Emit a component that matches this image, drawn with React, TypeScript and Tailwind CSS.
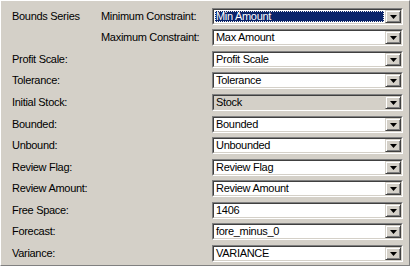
const rows: { label: string; sub?: string; value: string; h: number; focus?: boolean; disabled?: boolean }[] = [
  { label: "Bounds Series", sub: "Minimum Constraint:", value: "Min Amount", h: 21, focus: true },
  { label: "", sub: "Maximum Constraint:", value: "Max Amount", h: 22 },
  { label: "Profit Scale:", value: "Profit Scale", h: 21 },
  { label: "Tolerance:", value: "Tolerance", h: 22 },
  { label: "Initial Stock:", value: "Stock", h: 22, disabled: true },
  { label: "Bounded:", value: "Bounded", h: 21 },
  { label: "Unbound:", value: "Unbounded", h: 22 },
  { label: "Review Flag:", value: "Review Flag", h: 21 },
  { label: "Review Amount:", value: "Review Amount", h: 22 },
  { label: "Free Space:", value: "1406", h: 21 },
  { label: "Forecast:", value: "fore_minus_0", h: 22 },
  { label: "Variance:", value: "VARIANCE", h: 21 },
];

function Combo({ value, focus, disabled }: { value: string; focus?: boolean; disabled?: boolean }) {
  return (
    <div className="flex h-[17px] w-[191px] border border-t-[#808080] border-l-[#808080] border-b-white border-r-white">
      <div
        className={`flex min-w-0 flex-1 items-center border border-t-[#404040] border-l-[#404040] border-b-[#d4d0c8] border-r-[#d4d0c8] ${
          disabled ? "bg-[#d4d0c8]" : "bg-white"
        }`}
      >
        <div className="flex h-full flex-1 items-center p-px">
          {focus ? (
            <div className="flex h-full flex-1 items-center border border-dotted border-[#f0f0f0] bg-[#0a246a] text-white">
              {value}
            </div>
          ) : (
            <span className="pl-px">{value}</span>
          )}
        </div>
        <div className="flex h-full w-[16px] items-center justify-center border border-t-[#d4d0c8] border-l-[#d4d0c8] border-b-[#404040] border-r-[#404040] bg-[#d4d0c8] shadow-[inset_1px_1px_0_#fff,inset_-1px_-1px_0_#808080]">
          <svg width="7" height="4" viewBox="0 0 7 4">
            <path d="M0 0h7L3.5 4z" fill="#000" />
          </svg>
        </div>
      </div>
    </div>
  );
}

export default function App() {
  return (
    <div
      className="h-[266px] w-[410px] border border-t-white border-l-white border-b-[#808080] border-r-[#808080] bg-[#d4d0c8] pt-[7px] text-[11px] tracking-[-0.3px] text-black"
      style={{ fontFamily: '"Liberation Sans", Arial, sans-serif' }}
    >
      {rows.map((r, i) => (
        <div key={i} className="flex items-start" style={{ height: r.h }}>
          <div className="flex h-[17px] w-[211px] items-center pl-[11px]">
            <span className="w-[89px]">{r.label}</span>
            {r.sub && <span>{r.sub}</span>}
          </div>
          <Combo value={r.value} focus={r.focus} disabled={r.disabled} />
        </div>
      ))}
    </div>
  );
}
